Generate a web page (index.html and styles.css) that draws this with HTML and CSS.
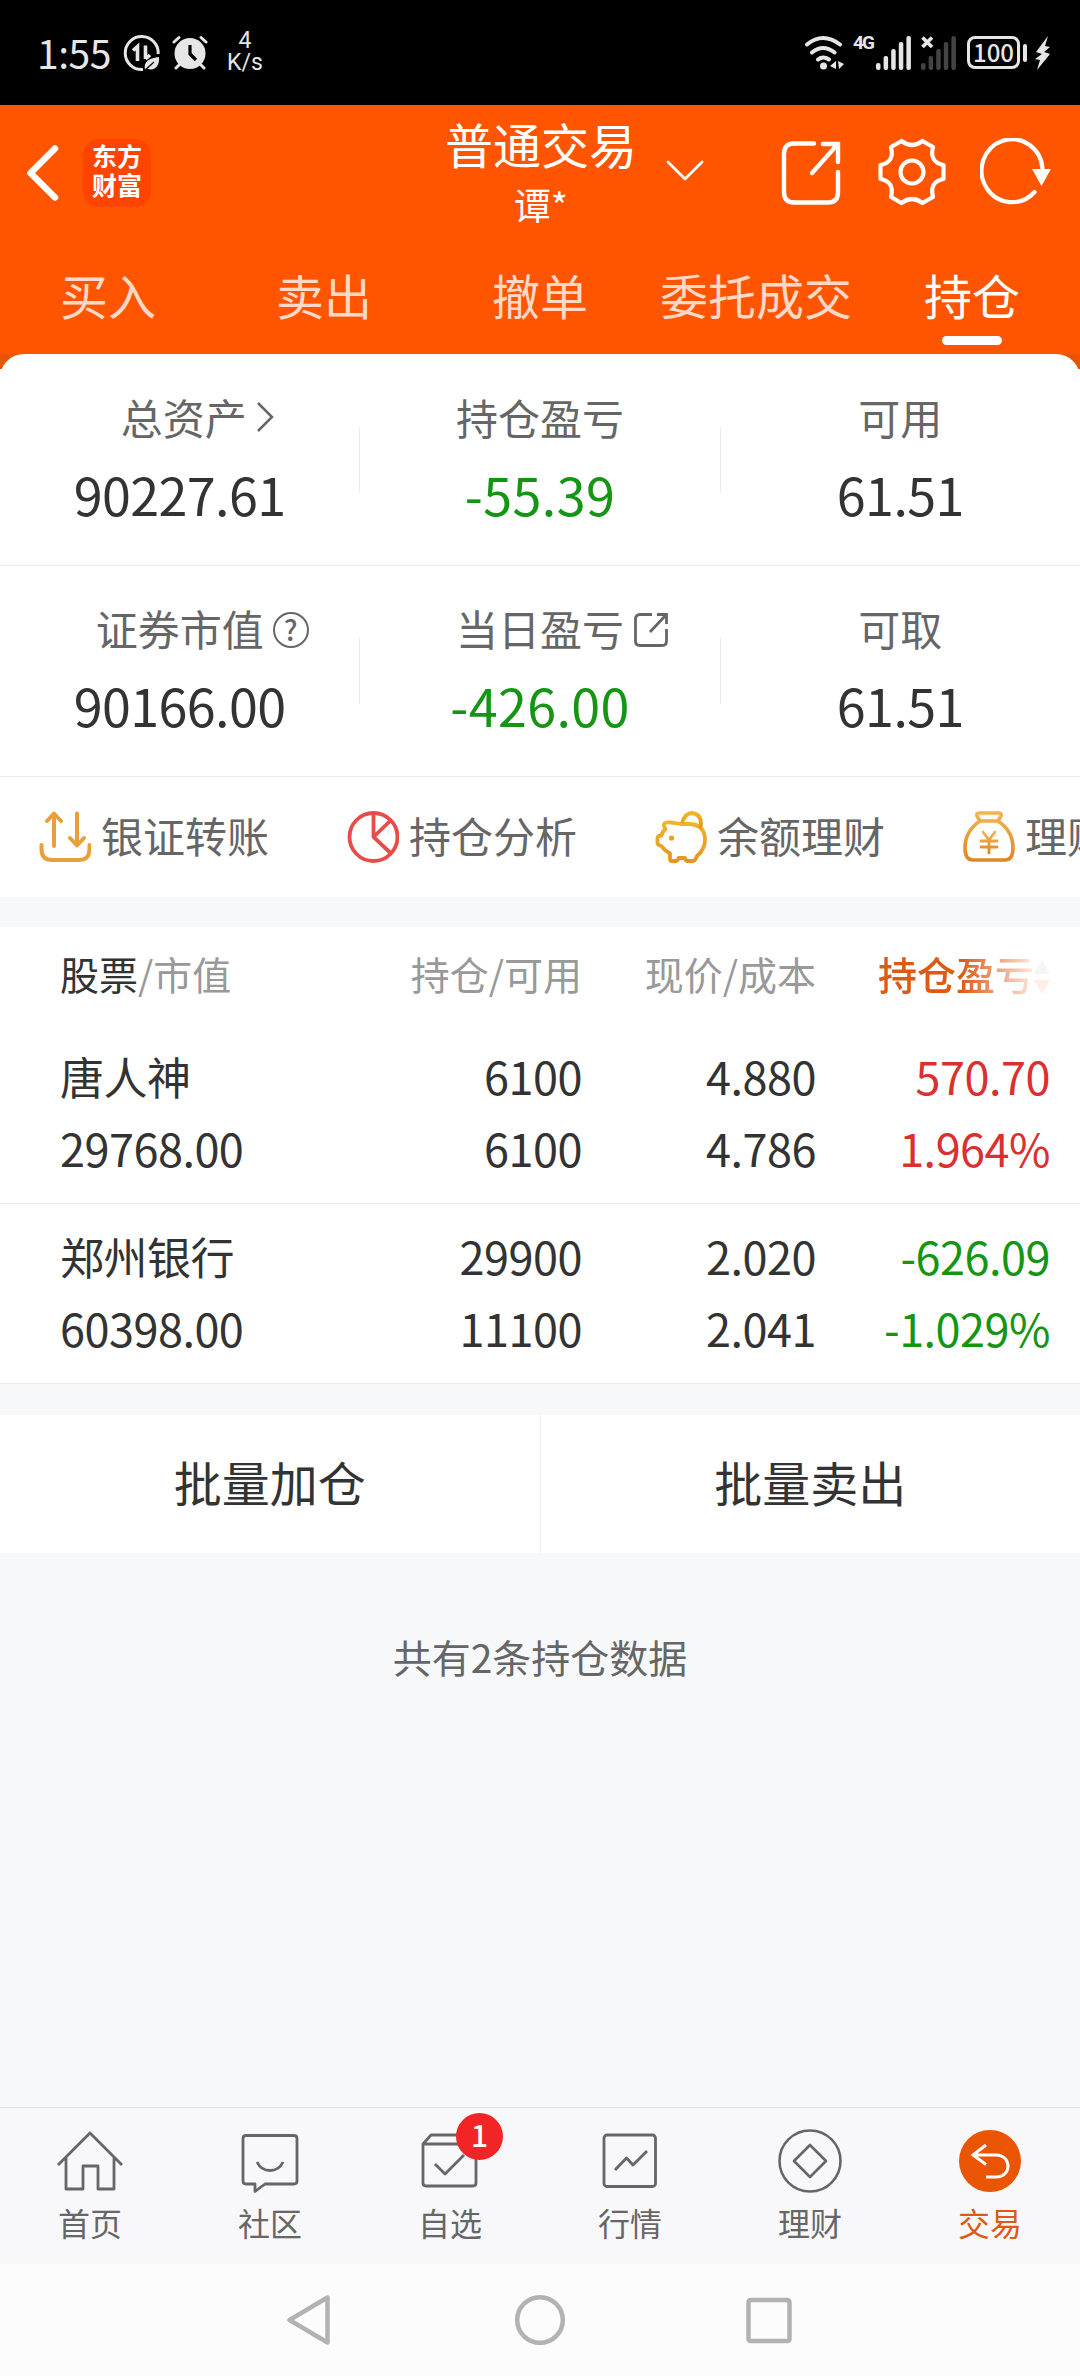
FILE: index.html
```html
<!DOCTYPE html>
<html lang="zh-CN">
<head>
    <meta charset="UTF-8">
    <meta name="viewport" content="width=device-width, initial-scale=1.0">
    <title>持仓</title>
    <link rel="stylesheet" href="styles.css">
</head>
<body>
    <div class="status-bar">
        <span class="time">1:55</span>
        <svg class="status-data" width="38" height="38" viewBox="0 0 38 38" fill="none" stroke="#e6e6e6">
            <path d="M20 35.5A16.500 16.500 0 1 1 35.200 20" stroke-width="3"/>
            <path d="M10 16.500L14.500 12.500V27M22.500 11.500V25M22.500 25L27 21" stroke-width="3.600"/>
            <path d="M22 36C20 27 27 24 36 23C37 32 31 38 24 34.500Z" fill="#e6e6e6" stroke="none"/>
            <path d="M21 37L31 28" stroke="#000" stroke-width="1.200"/>
        </svg>
        <svg class="status-alarm" width="36" height="36" viewBox="0 0 36 36" fill="none" stroke="#e6e6e6" stroke-width="3" stroke-linecap="round">
            <circle cx="18" cy="18.500" r="15.500" fill="#e6e6e6" stroke="none"/>
            <path d="M2 7L7 2.500M34 7L29 2.500M4 33L8 29M32 33L28 29"/>
            <path d="M18 10V19L24 25" stroke="#000" stroke-width="3.200" stroke-linecap="butt"/>
        </svg>
        <div class="net-speed"><span>4</span><span>K/s</span></div>

        <svg class="status-wifi" width="42" height="36" viewBox="0 0 42 36" fill="none" stroke="#e6e6e6" stroke-width="4" stroke-linecap="round">
            <path d="M3 9.500Q19 -3.500 36 9.500M8 17.500Q19 8.500 30.500 17.500M14 24.500Q19 20.500 25 24.500"/>
            <circle cx="19.500" cy="31" r="3.500" fill="#e6e6e6" stroke="none"/>
            <path d="M32 26V34L26 31ZM34 26L40 29L35 34Z" fill="#e6e6e6" stroke="none"/>
        </svg>
        <span class="net-type">4G</span>
        <svg class="signal" width="36" height="34" viewBox="0 0 36 34" fill="#e6e6e6">
            <rect x="0" y="27" width="4.500" height="7" rx="2"/><rect x="7.600" y="20" width="4.500" height="14" rx="2"/><rect x="15.200" y="13" width="4.500" height="21" rx="2"/><rect x="22.800" y="6" width="4.500" height="28" rx="2"/><rect x="30.400" y="0" width="4.500" height="34" rx="2"/>
        </svg>
        <svg class="signal-off" width="36" height="34" viewBox="0 0 36 34" fill="#444">
            <rect x="0" y="27" width="4.500" height="7" rx="2"/><rect x="7.600" y="20" width="4.500" height="14" rx="2"/><rect x="15.200" y="13" width="4.500" height="21" rx="2"/><rect x="22.800" y="6" width="4.500" height="28" rx="2"/><rect x="30.400" y="0" width="4.500" height="34" rx="2"/>
            <path d="M1.500 1.500L11 11M11 1.500L1.500 11" stroke="#e6e6e6" stroke-width="3.600"/>
        </svg>
        <div class="battery">100</div>
        <div class="battery-tip"></div>
        <svg class="bolt" width="16" height="36" viewBox="0 0 16 36" fill="#e6e6e6">
            <path d="M13 1L1 17L7 19L0 24L5 25L2 35L15 19L9 17L15 12L10 11Z"/>
        </svg>
    </div>

    <div class="header">
        <div class="title-bar">
            <svg class="back" width="36" height="60" viewBox="0 0 36 60" fill="none" stroke="#fff" stroke-width="6.500" stroke-linecap="round" stroke-linejoin="round"><path d="M31 5.500L6.500 30L31 54.500"/></svg>
            <div class="logo">东方<br>财富</div>
            <div class="account">
                <div class="account-type">普通交易</div>
                <div class="account-name">谭*</div>
            </div>
            <svg class="arrow-down" width="38" height="22" viewBox="0 0 38 22" fill="none" stroke="#fff" stroke-width="2.800" stroke-linecap="round" stroke-linejoin="round"><path d="M2 2L19 19L36 2"/></svg>
            <svg class="icon-share" width="62" height="66" viewBox="0 0 62 66" fill="none" stroke="#fff" stroke-width="4.400" stroke-linecap="round"><path d="M34 3.500H14Q4 3.500 4 14V52Q4 62.500 14 62.500H48Q58 62.500 58 52V32M43 4H58V22M57 5L32 33"/></svg>
            <svg class="icon-gear" width="68" height="68" viewBox="0 0 68 68" fill="none" stroke="#fff" stroke-width="4.200" stroke-linejoin="round">
                <path d="M23.500 3Q34 11 44.500 3L55 9Q51 24 65.500 27V41Q51 44 55 59L44.500 65Q34 57 23.500 65L13 59Q17 44 2.500 41V27Q17 24 13 9Z"/>
                <circle cx="34" cy="34" r="11.500"/>
            </svg>
            <svg class="icon-refresh" width="72" height="68" viewBox="0 0 72 68" fill="none" stroke="#fff" stroke-width="4.200" stroke-linecap="round">
                <path d="M54.500 54A30.500 31.500 0 1 1 62.500 31"/>
                <path d="M52 31H71L61.500 48Z" fill="#fff" stroke="none"/>
            </svg>
        </div>
        <div class="tabs">
            <div class="tab">买入</div>
            <div class="tab">卖出</div>
            <div class="tab">撤单</div>
            <div class="tab">委托成交</div>
            <div class="tab active">持仓</div>
        </div>
    </div>

    <div class="summary-wrap">
        <div class="summary">
            <div class="summary-row">
                <div class="cell">
                    <div class="label total">总资产<svg width="20" height="34" viewBox="0 0 20 34" fill="none" stroke="#666" stroke-width="2.500"><path d="M3 3L17 17L3 31"/></svg></div>
                    <div class="value">90227.61</div>
                </div>
                <div class="divider"></div>
                <div class="cell">
                    <div class="label">持仓盈亏</div>
                    <div class="value down">-55.39</div>
                </div>
                <div class="divider"></div>
                <div class="cell">
                    <div class="label">可用</div>
                    <div class="value">61.51</div>
                </div>
            </div>
            <div class="summary-row">
                <div class="cell">
                    <div class="label">证券市值<span class="tip"><span class="help">?</span></span></div>
                    <div class="value">90166.00</div>
                </div>
                <div class="divider"></div>
                <div class="cell">
                    <div class="label">当日盈亏<span class="tip"><svg width="36" height="36" viewBox="0 0 36 36" fill="none" stroke="#666" stroke-width="2.800"><path d="M19 2.500H7Q2.500 2.500 2.500 7V29Q2.500 33.500 7 33.500H29Q33.500 33.500 33.500 29V17M24 2.500H33.500V12M33 3L17 20"/></svg></span></div>
                    <div class="value down">-426.00</div>
                </div>
                <div class="divider"></div>
                <div class="cell">
                    <div class="label">可取</div>
                    <div class="value">61.51</div>
                </div>
            </div>
        </div>
    </div>

    <div class="shortcuts">
        <div class="shortcut">
            <svg width="52" height="52" viewBox="0 0 52 52" fill="none" stroke="#e8a03c" stroke-width="4" stroke-linecap="round" stroke-linejoin="round"><path d="M15 35V3M8 10L15 2.500L22 10M38 2.500V34M31 27L38 34.500L45 27M2.500 34V38Q2.500 49 13 49H40Q50.500 49 50.500 38V34"/></svg>
            <span>银证转账</span>
        </div>
        <div class="shortcut">
            <svg width="52" height="52" viewBox="0 0 52 52" fill="none" stroke="#e94a4a" stroke-width="3.800"><circle cx="26.500" cy="26" r="24"/><path d="M26.500 2V26L43.500 42M26.500 26L43.500 9.500"/></svg>
            <span>持仓分析</span>
        </div>
        <div class="shortcut">
            <svg width="52" height="52" viewBox="0 0 52 52" fill="none" stroke="url(#gold)" stroke-width="3.800" stroke-linejoin="round">
                <defs><linearGradient id="gold" x1="0" y1="0" x2="0" y2="1"><stop offset="0" stop-color="#f0b429"/><stop offset="1" stop-color="#e6961e"/></linearGradient></defs>
                <path d="M26 13Q20 12 16 11.500Q10 11 9 13Q8 14 10.500 18Q7 21 6.500 24.500Q2.500 24.500 2.500 27V32Q2.500 34 6.500 35Q9 39 15 42.500V48Q15 50 17 50H21Q23 50 23.500 47H30Q30.500 50 32.500 50H38Q40 50 42 45Q50 38 50 29Q50 13 33 13Z"/>
                <path d="M27 12Q30 2 37 2Q46 3 46 13Q46 16 44.500 17"/>
                <circle cx="16.500" cy="27" r="2.600" fill="#e9a022" stroke="none"/>
            </svg>
            <span>余额理财</span>
        </div>
        <div class="shortcut">
            <svg width="52" height="52" viewBox="0 0 52 52" fill="none" stroke="url(#bag)" stroke-width="3.600" stroke-linecap="round" stroke-linejoin="round">
                <defs><linearGradient id="bag" x1="0" y1="0" x2="0" y2="1"><stop offset="0" stop-color="#f2b450"/><stop offset="1" stop-color="#e08626"/></linearGradient></defs>
                <path d="M17 10L14 5Q13 2 16 2H36Q39 2 38 5L35 10ZM17 10Q2 20 2 37Q2 49 10 49H42Q50 49 50 37Q50 20 35 10"/>
                <path d="M20 21L26 29L32 21M26 29V42M18 30H34M18 36H34" stroke-width="2.800"/>
            </svg>
            <span>理财</span>
        </div>
    </div>

    <div class="holdings">
        <div class="row holdings-head">
            <div><span class="dark">股票</span>/市值</div>
            <div>持仓/可用</div>
            <div>现价/成本</div>
            <div class="sort">持仓盈亏<svg width="16" height="34" viewBox="0 0 16 34"><path d="M8 0L16 14H0Z" fill="#999"/><path d="M0 20H16L8 34Z" fill="#ff5500"/></svg></div>
        </div>
        <div class="row">
            <div><span class="name">唐人神</span><br>29768.00</div>
            <div>6100<br>6100</div>
            <div>4.880<br>4.786</div>
            <div class="up">570.70<br>1.964%</div>
        </div>
        <div class="row">
            <div><span class="name">郑州银行</span><br>60398.00</div>
            <div>29900<br>11100</div>
            <div>2.020<br>2.041</div>
            <div class="down">-626.09<br>-1.029%</div>
        </div>
    </div>

    <div class="batch">
        <div class="batch-btn">批量加仓</div>
        <div class="batch-btn">批量卖出</div>
    </div>

    <div class="count">共有2条持仓数据</div>

    <div class="tab-bar">
        <div class="tab-item">
            <svg width="72" height="72" viewBox="0 0 72 72" fill="none" stroke="#666" stroke-width="2.800" stroke-linejoin="round"><path d="M4 40L36 8L68 40M12 33V64H29V41H44V64H60V33"/></svg>
            <span>首页</span>
        </div>
        <div class="tab-item">
            <svg width="72" height="72" viewBox="0 0 72 72" fill="none" stroke="#666" stroke-width="2.800" stroke-linejoin="round"><path d="M12 10.500H60Q63 10.500 63 13.500V56Q63 59 60 59H31L21 66.500V59H12Q9 59 9 56V13.500Q9 10.500 12 10.500Z"/><path d="M23 37Q27 45.500 36 45.500Q45 45.500 49 37"/></svg>
            <span>社区</span>
        </div>
        <div class="tab-item">
            <svg width="72" height="72" viewBox="0 0 72 72" fill="none" stroke="#666" stroke-width="2.800" stroke-linejoin="round"><path d="M9 19L17 10H55L62 19V58Q62 61 59 61H12Q9 61 9 58ZM9 19H62M21 39L31 49L50 30"/></svg>
            <span class="badge">1</span>
            <span>自选</span>
        </div>
        <div class="tab-item">
            <svg width="72" height="72" viewBox="0 0 72 72" fill="none" stroke="#666" stroke-width="2.800" stroke-linejoin="round"><rect x="10" y="10" width="51.500" height="51.500" rx="3"/><path d="M21 45L32.500 33L39 40L53 26"/></svg>
            <span>行情</span>
        </div>
        <div class="tab-item">
            <svg width="72" height="72" viewBox="0 0 72 72" fill="none" stroke="#666" stroke-width="2.600" stroke-linejoin="round"><circle cx="36" cy="36" r="30.500"/><path d="M36 20L52 36L36 52L20 36Z"/></svg>
            <span>理财</span>
        </div>
        <div class="tab-item active">
            <svg width="72" height="72" viewBox="0 0 72 72" fill="none" stroke="#fff" stroke-width="3"><circle cx="36" cy="36" r="31" fill="#ea5504" stroke="none"/><path d="M32 20L19 30L32 39.500M19 30H42C58 30 58 52 42 52H32"/></svg>
            <span>交易</span>
        </div>
    </div>

    <div class="nav-bar">
        <svg width="60" height="60" viewBox="0 0 60 60" fill="none" stroke="#b2b2b2" stroke-width="4.500" stroke-linejoin="round"><path d="M47.500 7.500V52.500L9.500 30Z"/></svg>
        <svg width="60" height="60" viewBox="0 0 60 60" fill="none" stroke="#b2b2b2" stroke-width="4.500"><circle cx="30" cy="30" r="22.800"/></svg>
        <svg width="60" height="60" viewBox="0 0 60 60" fill="none" stroke="#b2b2b2" stroke-width="4.500"><rect x="8.500" y="10" width="41" height="41" rx="2"/></svg>
    </div>
</body>
</html>
```
FILE: styles.css
```css
* {
  box-sizing: border-box;
}

body {
  margin: 0;
  width: 1080px;
  height: 2376px;
  display: flex;
  flex-direction: column;
  overflow: hidden;
  font-family: "Noto Sans CJK SC", sans-serif;
  background-color: #f7f8fa;
  color: #333;
}

svg {
  display: block;
  flex: none;
}

/* system status bar */
.status-bar {
  display: flex;
  align-items: flex-start;
  height: 105px;
  padding-left: 37px;
  background-color: #000;
  color: #e6e6e6;
}

.time {
  width: 86px;
  margin-top: 22px;
  font-size: 39px;
  line-height: 60px;
  letter-spacing: -0.5px;
}

.status-data {
  margin-top: 34px;
}

.status-alarm {
  margin: 35px 0 0 11px;
}

.net-speed {
  display: flex;
  flex-direction: column;
  align-items: center;
  width: 40px;
  margin: 30px 0 0 17px;
  font-family: Roboto, sans-serif;
  font-size: 23px;
  line-height: 22px;
}

.status-wifi {
  margin: 35px 0 0 539px;
}

.net-type {
  width: 23px;
  margin: 31px 0 0 7px;
  font-family: Roboto, sans-serif;
  font-size: 19px;
  font-weight: bold;
  line-height: 24px;
  letter-spacing: -2px;
}

.signal,
.signal-off {
  margin-top: 36px;
}

.signal-off {
  margin-left: 9px;
}

.battery {
  width: 53px;
  height: 33px;
  margin: 36px 0 0 10px;
  border: 3px solid #e6e6e6;
  border-radius: 8px;
  font-size: 24px;
  font-weight: 500;
  line-height: 25px;
  text-align: center;
}

.battery-tip {
  width: 4px;
  height: 18px;
  margin: 44px 8px 0 3px;
  border-radius: 2px;
  background-color: #e6e6e6;
}

.bolt {
  margin-top: 35px;
}

/* orange header */
.header {
  height: 249px;
  background-color: #ff5500;
  color: #fff;
}

.title-bar {
  display: flex;
  align-items: flex-start;
  height: 135px;
  padding-left: 24px;
}

.back {
  margin-top: 38px;
}

.logo {
  width: 68px;
  height: 68px;
  margin: 34px 0 0 23px;
  padding-top: 2px;
  border-radius: 16px;
  background-color: #ff4400;
  font-size: 25px;
  font-weight: bold;
  line-height: 29px;
  text-align: center;
}

.account {
  width: 240px;
  margin: 8px 0 0 270px;
  text-align: center;
}

.account-type {
  font-size: 48px;
  line-height: 60px;
}

.account-name {
  margin-top: 6px;
  font-size: 37px;
  line-height: 50px;
}

.arrow-down {
  margin: 55px 0 0 5px;
}

.icon-share {
  margin: 35px 0 0 76px;
}

.icon-gear {
  margin: 33px 0 0 36px;
}

.icon-refresh {
  margin: 33px 0 0 34px;
}

.tabs {
  display: flex;
  padding-top: 24px;
}

.tab {
  width: 216px;
  font-size: 48px;
  line-height: 60px;
  text-align: center;
  color: #ffd9c6;
}

.tab.active {
  color: #fff;
}

.tab.active::after {
  content: "";
  display: block;
  width: 60px;
  height: 9px;
  margin: 12px auto 0;
  border-radius: 5px;
  background-color: #fff;
}

/* asset summary */
.summary-wrap {
  background: linear-gradient(#e85500 15px, #fff 15px);
}

.summary {
  padding-top: 1px;
  border-radius: 24px 24px 0 0;
  background-color: #fff;
}

.summary-row {
  display: flex;
  height: 211px;
  border-bottom: 1px solid #ebebeb;
}

.cell {
  flex: 1;
  padding-top: 32px;
  text-align: center;
}

.divider {
  width: 1px;
  height: 66px;
  margin-top: 72px;
  background-color: #ebebeb;
}

.label {
  display: flex;
  justify-content: center;
  align-items: center;
  height: 60px;
  font-size: 42px;
  line-height: 60px;
  color: #666;
}

.label.total {
  gap: 8px;
  padding-left: 36px;
}

/* zero width, so the label text stays centred */
.tip {
  display: flex;
  width: 0;
  padding: 3px 0 0 9px;
  margin-right: -9px;
}

.help {
  flex: none;
  width: 36px;
  height: 36px;
  border: 2.5px solid #666;
  border-radius: 50%;
  font-size: 28px;
  font-weight: 500;
  line-height: 30px;
}

.value {
  margin-top: 12px;
  font-size: 52px;
  line-height: 70px;
  letter-spacing: -0.6px;
}

.value.down {
  letter-spacing: 0.4px;
}

.down {
  color: #149614;
}

.up {
  color: #d93030;
}

/* shortcuts, the last one runs off the screen */
.shortcuts {
  display: flex;
  gap: 78px;
  height: 120px;
  padding-left: 39px;
  overflow: hidden;
  background-color: #fff;
}

.shortcut {
  display: flex;
  flex: none;
  align-items: center;
  gap: 10px;
  font-size: 42px;
  color: #666;
}

.shortcut span {
  margin-bottom: 5px;
  white-space: nowrap;
}

/* holdings table */
.holdings {
  margin-top: 30px;
  background-color: #fff;
}

.row {
  display: grid;
  grid-template-columns: 282px 240px 234px 234px;
  height: 180px;
  padding: 16px 30px 0 60px;
  border-bottom: 1px solid #ebebeb;
  font-size: 45px;
  line-height: 72px;
  letter-spacing: -0.5px;
  text-align: right;
}

.row > div:first-child {
  text-align: left;
}

.name {
  font-size: 44px;
}

.row.holdings-head {
  height: 97px;
  padding-top: 0;
  border-bottom: none;
  font-size: 39px;
  line-height: 92px;
  letter-spacing: 0;
  color: #999;
}

.dark {
  color: #333;
}

.sort {
  display: flex;
  justify-content: flex-end;
  color: #dc5a14;
  font-weight: 500;
  -webkit-mask-image: linear-gradient(to right, #000 62%, rgba(0, 0, 0, 0.1) 94%);
  mask-image: linear-gradient(to right, #000 62%, rgba(0, 0, 0, 0.1) 94%);
}

.sort svg {
  margin-top: 33px;
}

.batch {
  display: flex;
  height: 138px;
  margin-top: 31px;
  background-color: #fff;
}

.batch-btn {
  flex: 1;
  font-size: 48px;
  line-height: 133px;
  text-align: center;
}

.batch-btn:first-child {
  border-right: 1px solid #f2f2f2;
}

.count {
  flex: 1;
  padding-top: 73px;
  font-size: 39px;
  line-height: 60px;
  text-align: center;
  color: #666;
}

/* bottom tab bar */
.tab-bar {
  display: flex;
  height: 157px;
  border-top: 1px solid #dedede;
  background-color: #f8f8fa;
}

.tab-item {
  position: relative;
  display: flex;
  flex-direction: column;
  align-items: center;
  width: 180px;
  padding-top: 17px;
  gap: 5px;
  font-size: 32px;
  line-height: 40px;
  color: #666;
}

.tab-item.active {
  color: #dc5a14;
}

.badge {
  position: absolute;
  top: 5px;
  left: 96px;
  width: 47px;
  height: 47px;
  border-radius: 50%;
  background-color: #f12525;
  font-size: 30px;
  font-weight: 500;
  line-height: 43px;
  text-align: center;
  color: #fff;
}

/* system navigation */
.nav-bar {
  display: flex;
  justify-content: center;
  align-items: center;
  gap: 170px;
  height: 112px;
  background-color: #fcfcfc;
}
```
